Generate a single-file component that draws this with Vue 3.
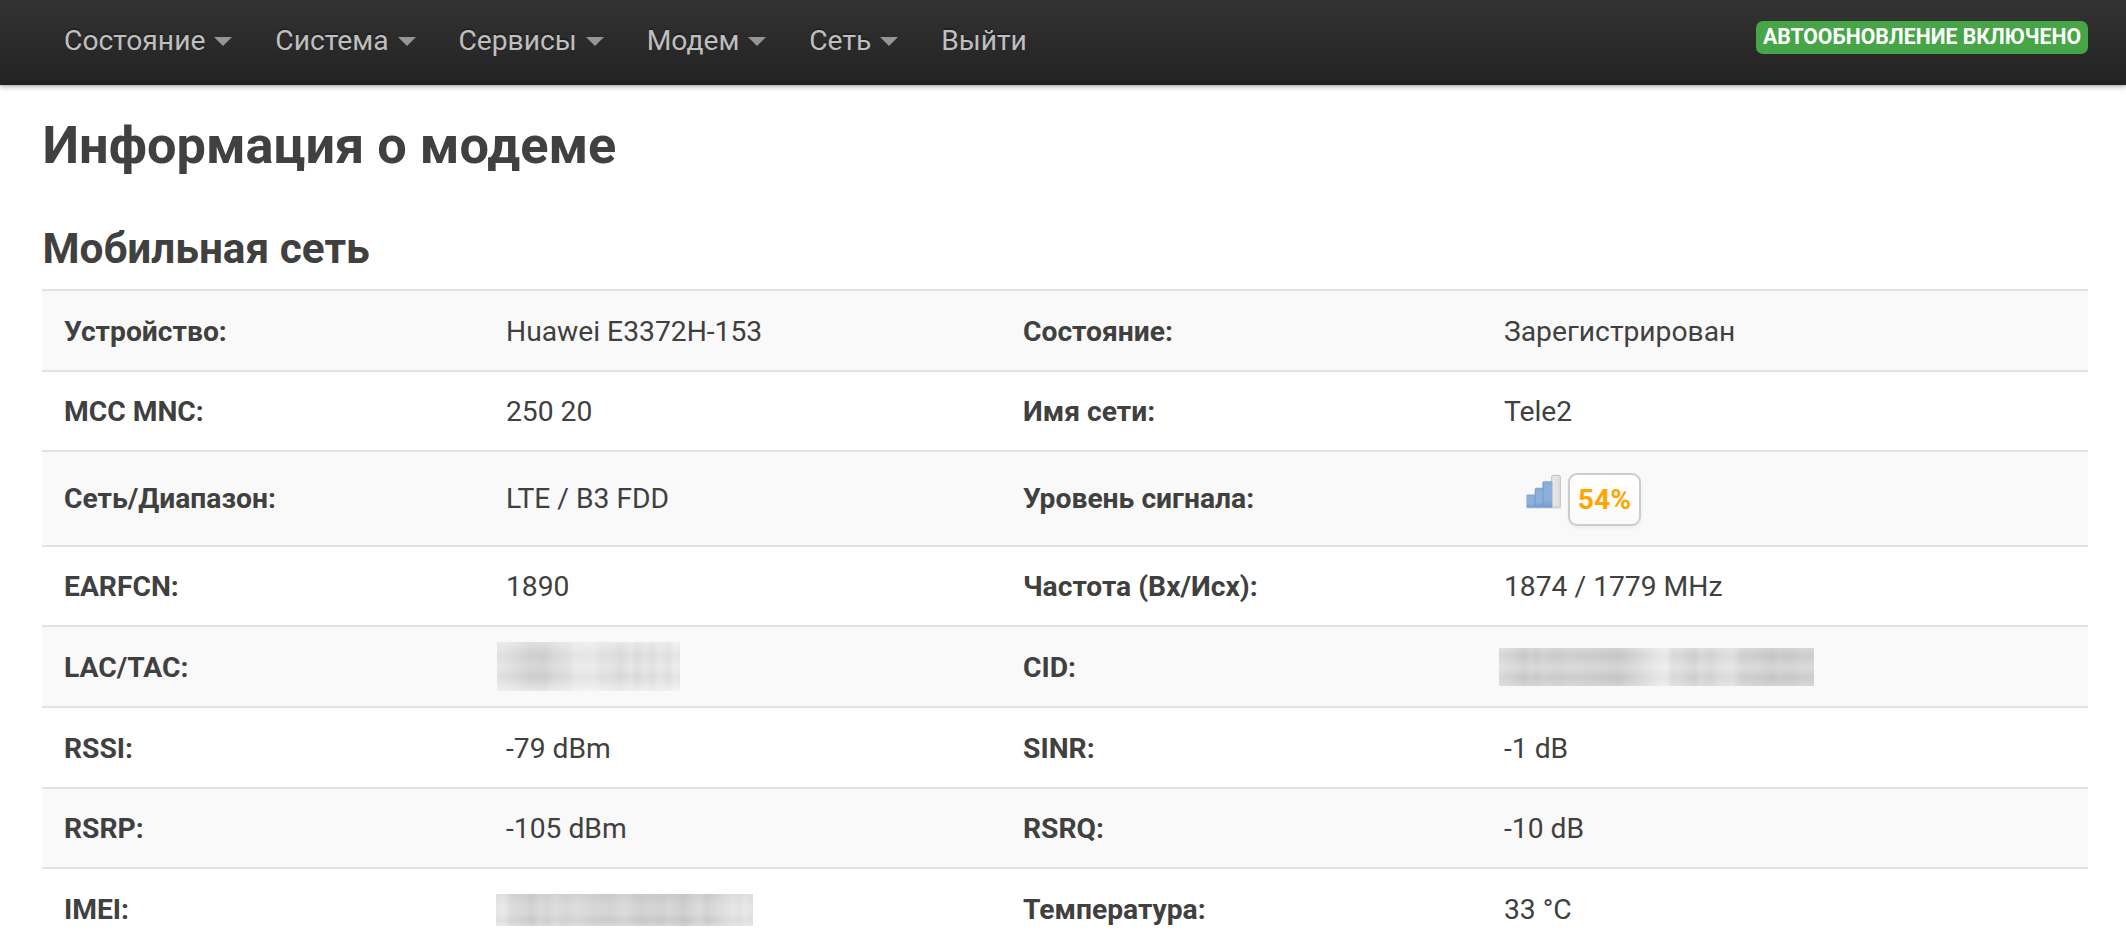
<script setup>
const menu = [
  { label: 'Состояние', drop: true },
  { label: 'Система', drop: true },
  { label: 'Сервисы', drop: true },
  { label: 'Модем', drop: true },
  { label: 'Сеть', drop: true },
  { label: 'Выйти', drop: false },
]

const rows = [
  ['Устройство:', 'Huawei E3372H-153', 'Состояние:', 'Зарегистрирован'],
  ['MCC MNC:', '250 20', 'Имя сети:', 'Tele2'],
  ['Сеть/Диапазон:', 'LTE / B3 FDD', 'Уровень сигнала:', { signal: '54%' }],
  ['EARFCN:', '1890', 'Частота (Вх/Исх):', '1874 / 1779 MHz'],
  ['LAC/TAC:', { mask: 'lac' }, 'CID:', { mask: 'cid' }],
  ['RSSI:', '-79 dBm', 'SINR:', '-1 dB'],
  ['RSRP:', '-105 dBm', 'RSRQ:', '-10 dB'],
  ['IMEI:', { mask: 'imei' }, 'Температура:', '33 °C'],
]
</script>

<template>
  <div class="page">
    <header class="topbar">
      <nav class="menu">
        <a v-for="m in menu" :key="m.label" class="item">
          <span>{{ m.label }}</span>
          <i v-if="m.drop" class="caret"></i>
        </a>
      </nav>
      <span class="refresh">АВТООБНОВЛЕНИЕ ВКЛЮЧЕНО</span>
    </header>
    <main class="content">
      <h2>Информация о модеме</h2>
      <h3>Мобильная сеть</h3>
      <div class="table">
        <div v-for="(r, i) in rows" :key="i" class="row" :class="{ tall: i === 2, raised: i === 2 || i === 3 }">
          <div v-for="(c, j) in r" :key="j" class="cell" :class="{ label: j % 2 === 0 }">
            <template v-if="typeof c === 'string'">{{ c }}</template>
            <span v-else-if="c.mask" class="mask" :class="c.mask"></span>
            <div v-else class="signal">
              <svg class="bars" width="36" height="36" viewBox="0 0 36 36">
                <defs>
                  <linearGradient id="blue" x1="0" y1="0" x2="0" y2="1">
                    <stop offset="0" stop-color="#7fa7d6" />
                    <stop offset="0.15" stop-color="#8aafdb" />
                    <stop offset="0.7" stop-color="#8db1da" />
                    <stop offset="1" stop-color="#7399ca" />
                  </linearGradient>
                  <linearGradient id="grey" x1="0" y1="0" x2="1" y2="0">
                    <stop offset="0" stop-color="#e9e9e6" />
                    <stop offset="1" stop-color="#dcdcd8" />
                  </linearGradient>
                </defs>
                <rect x="1.5" y="32.8" width="34" height="2" rx="1" fill="#e2e2e2" />
                <rect x="25.6" y="1.4" width="8.8" height="31.8" rx="1.8" fill="url(#grey)" stroke="#cacac6" stroke-width="1.3" />
                <rect x="16.6" y="7.2" width="9.8" height="26.6" rx="1" fill="url(#blue)" />
                <rect x="9" y="13.8" width="8" height="20" rx="1" fill="url(#blue)" />
                <rect x="0.4" y="20.4" width="9" height="13.4" rx="1" fill="url(#blue)" />
                <path d="M9.2 15v18M17 8.5v24.5" stroke="#6f96c8" stroke-width="1" opacity="0.8" />
              </svg>
              <span class="percent">{{ c.signal }}</span>
            </div>
          </div>
        </div>
      </div>
    </main>
  </div>
</template>

<style>
body {
  background: #fff;
  overflow: hidden;
}
</style>

<style scoped>
.page {
  height: 950px;
  overflow: hidden;
  font-family: Roboto, sans-serif;
  font-size: 28.24px;
  color: #404040;
}
.topbar {
  height: 85px;
  box-sizing: border-box;
  padding: 0 38px 0 64px;
  display: flex;
  justify-content: space-between;
  background: linear-gradient(#333, #222);
  box-shadow: 0 2px 6px rgba(0, 0, 0, 0.25), 0 1px 2px rgba(0, 0, 0, 0.15);
}
.menu {
  display: flex;
  gap: 42.9px;
  height: 80px;
}
.item {
  display: flex;
  align-items: center;
  color: #bfbfbf;
  text-shadow: 0 -2px 0 rgba(0, 0, 0, 0.25);
  white-space: nowrap;
}
.caret {
  margin: 3px 0 0 9px;
  border-left: 9px solid transparent;
  border-right: 9px solid transparent;
  border-top: 9px solid #959595;
}
.refresh {
  margin-top: 21px;
  height: 33px;
  width: 332px;
  box-sizing: border-box;
  border-radius: 7px;
  background: #46a546;
  color: #fff;
  font-size: 21.2px;
  font-weight: 700;
  line-height: 31px;
  text-align: center;
  white-space: nowrap;
}
.content {
  padding: 0 38px 0 42px;
}
h2,
h3 {
  margin: 0 0 0 0.5px;
  font-weight: 700;
  white-space: nowrap;
}
h2 {
  padding-top: 22px;
  font-size: 52.3px;
  line-height: 76px;
}
h3 {
  padding-top: 28px;
  font-size: 42.35px;
  line-height: 76px;
  height: 76px;
  margin-bottom: 2px;
}
.row {
  display: grid;
  grid-template-columns: 442px 517px 481px 1fr;
  padding-left: 22px;
  height: 80.6px;
  box-sizing: border-box;
  border-top: 2px solid #e2e2e2;
}
.row.tall {
  height: 94.6px;
}
.row:nth-child(odd) {
  background: #f9f9f9;
}
.cell {
  display: flex;
  align-items: center;
  padding-top: 2px;
  white-space: nowrap;
}
.raised .cell {
  padding-top: 0.5px;
}
.label {
  font-weight: 700;
}
.signal {
  display: flex;
  align-items: flex-start;
  margin-left: 21px;
  padding-top: 2px;
}
.bars {
  margin: 0.5px -0.5px 0 0.5px;
}
.percent {
  margin-left: 7px;
  width: 73px;
  height: 53px;
  box-sizing: border-box;
  border: 2px solid #ccc;
  border-radius: 9px;
  background: linear-gradient(#fff 40%, #fafafa);
  box-shadow: 0 2px 4px rgba(0, 0, 0, 0.05);
  color: #ffa500;
  font-weight: 700;
  line-height: 49px;
  text-align: center;
}
.mask {
  display: block;
}
.mask.lac {
  width: 183px;
  height: 49px;
  margin: 0 0 2px -9px;
  background:
    linear-gradient(rgba(249, 249, 249, 0.35), rgba(150, 150, 150, 0.06) 28%, rgba(249, 249, 249, 0.12) 50%, rgba(150, 150, 150, 0.07) 72%, rgba(249, 249, 249, 0.55)),
    linear-gradient(90deg, #e5e5e5, #e2e2e2 5%, #dadada 12%, #d2d2d2 18%, #d2d2d2 22%, #d0d0d0 26%, #dcdcdc 32%, #e1e1e1 39%, #e9e9e9 42%, #ebebeb 53%, #e4e4e4 57%, #e2e2e2 63%, #dcdcdc 68%, #e2e2e2 71%, #e6e6e6 73%, #dddddd 76%, #e5e5e5 81%, #dfdfdf 85%, #e8e8e8 88%, #e2e2e2 94%, #ececec 97%, #e8e8e8);
}
.mask.cid {
  width: 315px;
  height: 38px;
  margin: 0 0 2px -5px;
  background:
    linear-gradient(rgba(249, 249, 249, 0.2), rgba(120, 120, 120, 0.04) 20%, rgba(249, 249, 249, 0.25) 50%, rgba(120, 120, 120, 0.04) 78%, rgba(249, 249, 249, 0.18)),
    linear-gradient(90deg, #dadada, #d2d2d2 5%, #cacaca 8%, #d0d0d0 10%, #cccccc 12%, #d1d1d1 14%, #cdcdcd 19%, #d1d1d1 22%, #cdcdcd 31%, #c8c8c8 38%, #d2d2d2 42%, #dfdfdf 47%, #e7e7e7 50%, #ececec 53%, #dcdcdc 55%, #dadada 58%, #cfcfcf 62%, #d9d9d9 64%, #d4d4d4 67%, #dddddd 70%, #e1e1e1 74%, #d2d2d2 77%, #cfcfcf 82%, #c8c8c8 87%, #cdcdcd 89%, #cacaca 92%, #d0d0d0 96%, #cfcfcf);
}
.mask.imei {
  width: 257px;
  height: 32px;
  margin: 2px 0 0 -10px;
  background:
    linear-gradient(rgba(150, 150, 150, 0.07), rgba(249, 249, 249, 0.15) 40%, rgba(249, 249, 249, 0.15) 60%, rgba(120, 120, 120, 0.04) 82%, rgba(249, 249, 249, 0.2)),
    linear-gradient(90deg, #e4e4e4, #e6e6e6 3%, #d8d8d8 6%, #d2d2d2 11%, #cbcbcb 14%, #d6d6d6 17%, #d2d2d2 20%, #d9d9d9 23%, #d3d3d3 27%, #d8d8d8 31%, #d1d1d1 38%, #cecece 45%, #d6d6d6 50%, #cbcbcb 56%, #cecece 61%, #cbcbcb 65%, #d1d1d1 67%, #c8c8c8 73%, #cfcfcf 76%, #d7d7d7 79%, #cdcdcd 82%, #dadada 88%, #e2e2e2 92%, #dfdfdf 95%, #e6e6e6 97%, #dfdfdf);
}
</style>
